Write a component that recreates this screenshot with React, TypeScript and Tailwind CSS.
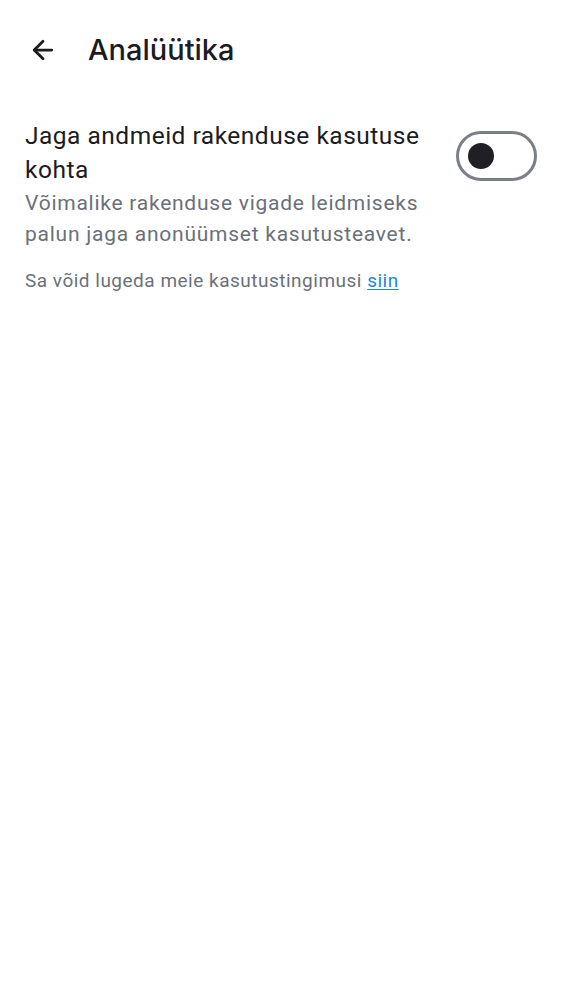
import { ArrowLeft } from "lucide-react";

export default function App() {
  return (
    <main className="min-h-screen w-full bg-white" style={{ fontFamily: "Roboto, 'Noto Sans', sans-serif" }}>
      <header className="flex h-[100px] items-center gap-[30px] px-[28px]">
        <ArrowLeft className="h-[30px] w-[30px] text-[#1c1b1f]" strokeWidth={2.2} />
        <h1 className="text-[29px] font-medium text-[#1c1b1f] font-['Inter',sans-serif]">Analüütika</h1>
      </header>
      <section className="flex items-start justify-between pl-[25px] pr-[25px] pt-[19px]">
        <div className="max-w-[410px]">
          <h2 className="text-[24.5px] leading-[34px] tracking-[0.5px] text-[#1c1b1f]">Jaga andmeid rakenduse kasutuse kohta</h2>
          <p className="mt-[1px] text-[21px] leading-[31px] tracking-[0.75px] text-[#6b7079]">
            Võimalike rakenduse vigade leidmiseks palun jaga anonüümset kasutusteavet.
          </p>
        </div>
        <button className="mt-[12px] flex h-[50px] w-[81px] shrink-0 items-center rounded-full border-[3px] border-[#7b8088] bg-white pl-[9px]">
          <span className="h-[26px] w-[26px] rounded-full bg-[#1f1f24]" />
        </button>
      </section>
      <p className="px-[25px] pt-[17px] text-[19px] leading-[28px] tracking-[0.5px] text-[#6b7079]">
        Sa võid lugeda meie kasutustingimusi{" "}
        <a href="#" className="text-[#1a87e0] underline underline-offset-2">siin</a>
      </p>
    </main>
  );
}
